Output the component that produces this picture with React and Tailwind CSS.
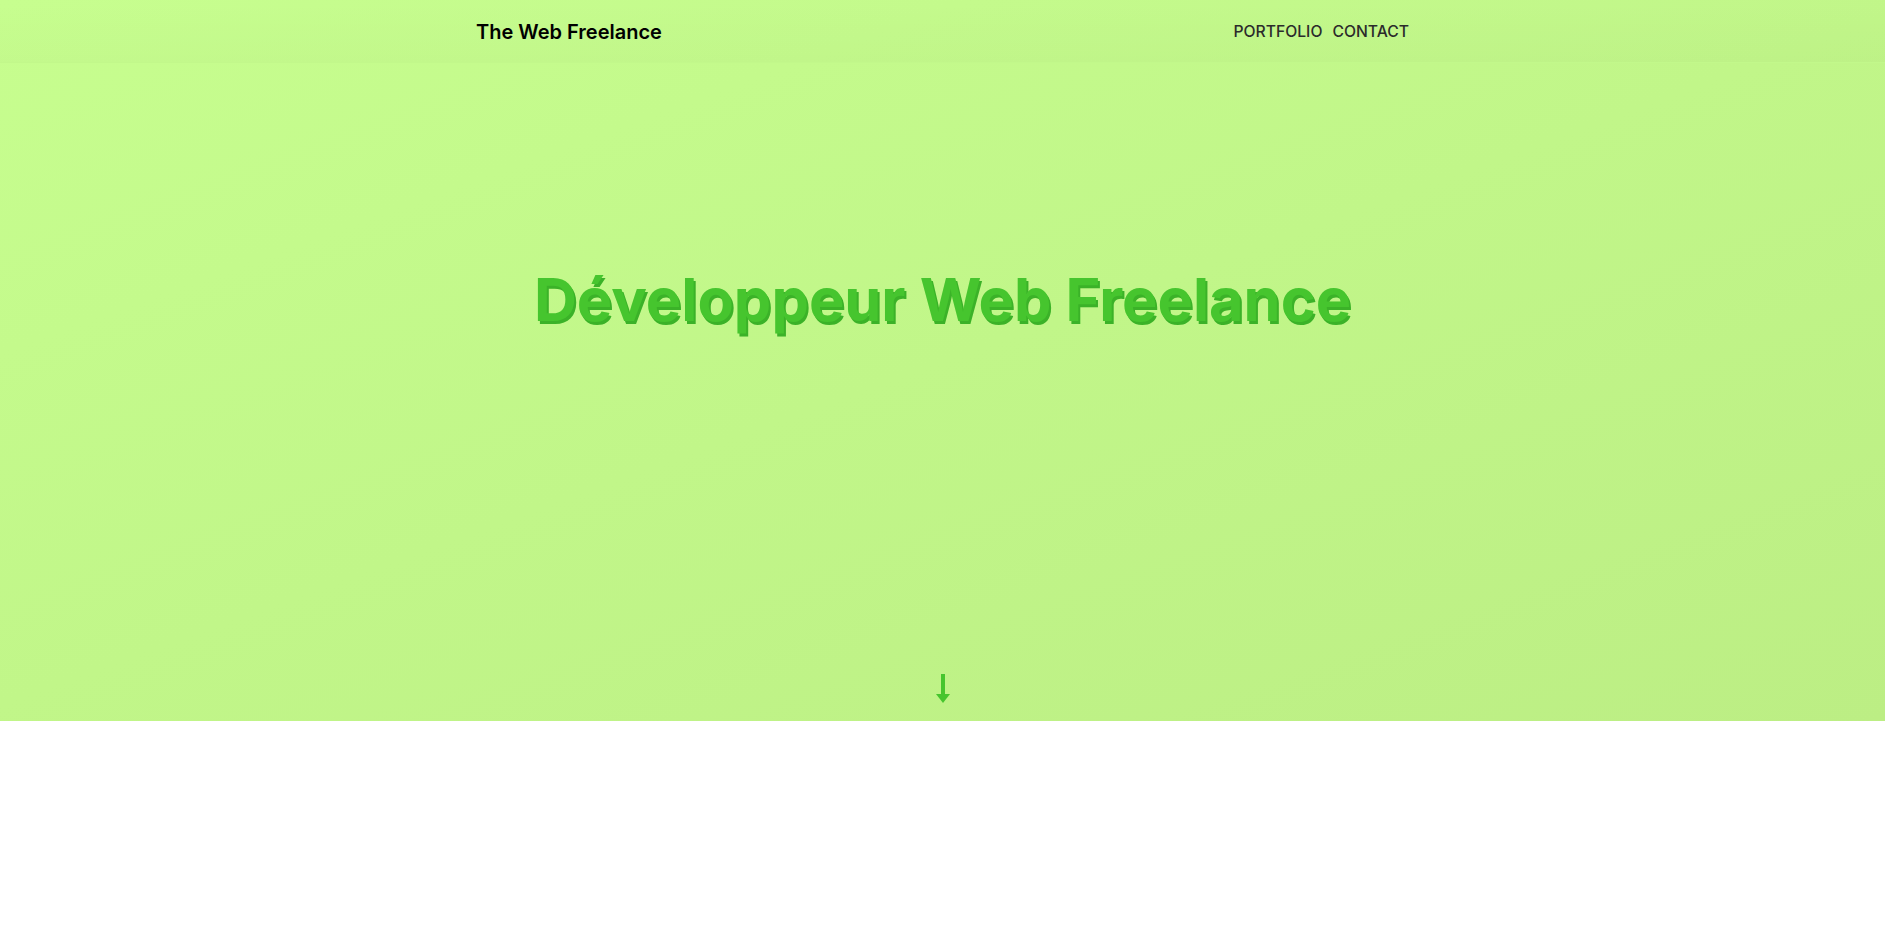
export default function App() {
  const font = { fontFamily: "Inter, 'Noto Sans', sans-serif" };
  return (
    <div style={font} className="w-full min-h-[948px] bg-white">
      <section className="h-[721px] flex flex-col bg-[linear-gradient(160deg,#c7fe8f_0%,#c1f689_50%,#bcee84_100%)]">
        <header className="h-[63px] shrink-0 flex items-center justify-between pt-[2px] px-[476px] bg-[linear-gradient(180deg,rgba(0,0,0,0)_0%,rgba(0,0,0,0.015)_100%)] border-b border-[#c2f88b]">
          <span className="text-[20px] font-semibold text-black">The Web Freelance</span>
          <nav className="flex gap-[10px] text-[15.7px] font-medium text-[#2b2b2b]">
            <a>PORTFOLIO</a>
            <a>CONTACT</a>
          </nav>
        </header>
        <div className="flex-1 flex flex-col items-center">
          <h1 className="mt-[207px] text-[59.5px] leading-none font-bold text-[#46c52e] [text-shadow:2px_3px_0_#3bb228]">
            Développeur Web Freelance
          </h1>
          <div className="mt-auto mb-[18px]">
            <svg width="14" height="29" viewBox="0 0 14 29">
              <rect x="5" y="0" width="4" height="21" fill="#46c52e" />
              <polygon points="0,20 14,20 7,29" fill="#46c52e" />
            </svg>
          </div>
        </div>
      </section>
    </div>
  );
}
